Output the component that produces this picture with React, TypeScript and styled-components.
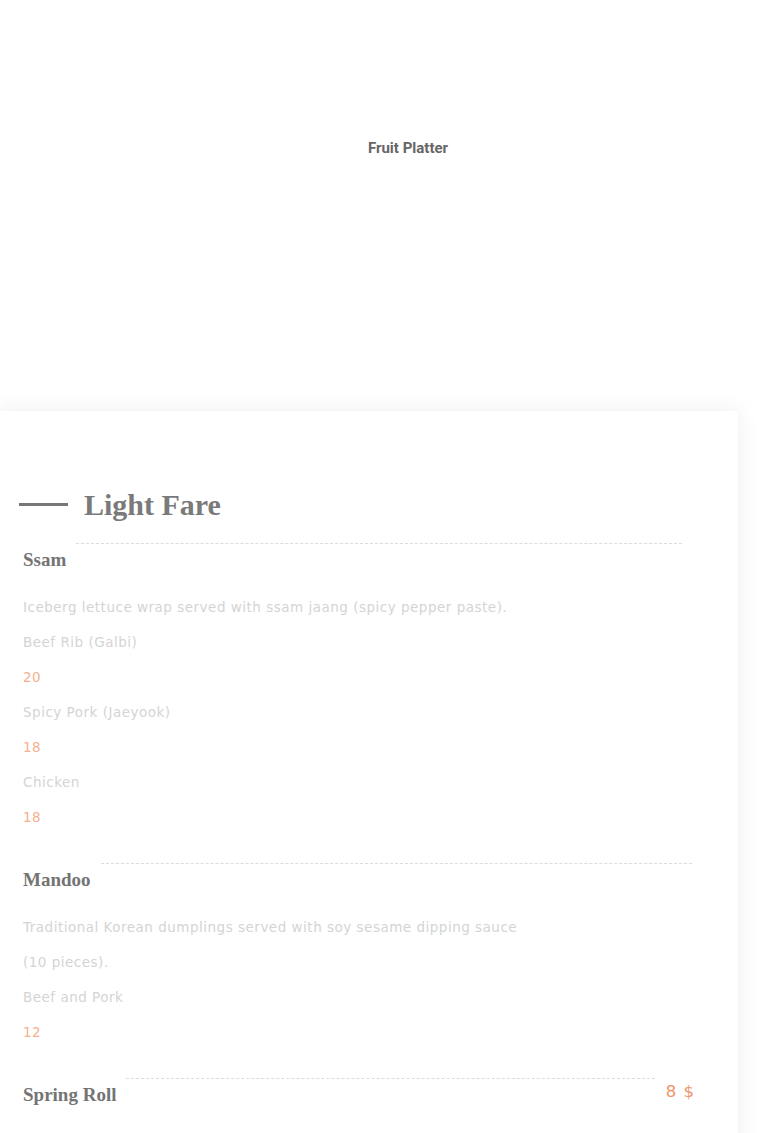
import React from 'react';
import styled, { createGlobalStyle } from 'styled-components';

interface MenuItem {
  title: string;
  price?: string;
  lineEnd: number;
  lines: { text: string; price?: boolean }[];
}

const items: MenuItem[] = [
  {
    title: 'Ssam',
    lineEnd: 11,
    lines: [
      { text: 'Iceberg lettuce wrap served with ssam jaang (spicy pepper paste).' },
      { text: 'Beef Rib (Galbi)' },
      { text: '20', price: true },
      { text: 'Spicy Pork (Jaeyook)' },
      { text: '18', price: true },
      { text: 'Chicken' },
      { text: '18', price: true },
    ],
  },
  {
    title: 'Mandoo',
    lineEnd: 1,
    lines: [
      { text: 'Traditional Korean dumplings served with soy sesame dipping sauce' },
      { text: '(10 pieces).' },
      { text: 'Beef and Pork' },
      { text: '12', price: true },
    ],
  },
  {
    title: 'Spring Roll',
    price: '8 $',
    lineEnd: 11,
    lines: [
      { text: 'Crispy vegetable spring rolls served with sweet chili dipping sauce.' },
    ],
  },
];

const App: React.FC = () => {
  return (
    <>
      <GlobalStyle />
      <Page>
        <Hero>
          <HeroTitle>Fruit Platter</HeroTitle>
        </Hero>
        <Card>
          <SectionHeading>
            <HeadingRule />
            <HeadingText>Light Fare</HeadingText>
          </SectionHeading>
          {items.map((item) => (
            <Item key={item.title}>
              <ItemHeader>
                <ItemTitle>{item.title}</ItemTitle>
                <Dots $end={item.lineEnd} />
                {item.price && <ItemPrice>{item.price}</ItemPrice>}
              </ItemHeader>
              <Lines>
                {item.lines.map((line, i) => (
                  <Line key={i} $price={line.price}>
                    {line.text}
                  </Line>
                ))}
              </Lines>
            </Item>
          ))}
        </Card>
      </Page>
    </>
  );
};

export default App;

const GlobalStyle = createGlobalStyle`
  html, body {
    margin: 0;
    padding: 0;
    background: #ffffff;
    overflow: hidden;
  }
  body {
    font-family: "DejaVu Sans", "Noto Sans", sans-serif;
  }
`;

const Page = styled.div`
  width: 770px;
  height: 1133px;
  overflow: hidden;
`;

const Hero = styled.div`
  height: 411px;
  display: flex;
  justify-content: center;
  padding: 139px 0 0 46px;
  box-sizing: border-box;
`;

const HeroTitle = styled.div`
  font-family: Roboto, "Liberation Sans", sans-serif;
  font-weight: 700;
  font-size: 15px;
  line-height: 18px;
  color: #666666;
  height: 18px;
`;

const Card = styled.div`
  width: 738px;
  min-height: 800px;
  background: #ffffff;
  box-shadow: 0 0 22px rgba(0, 0, 0, 0.07);
  padding: 75px 45px 0 22px;
  box-sizing: border-box;
`;

const SectionHeading = styled.div`
  display: flex;
  align-items: center;
  height: 36px;
  margin-left: -3px;
  margin-bottom: 26px;
`;

const HeadingRule = styled.span`
  width: 49px;
  height: 3px;
  background: #777777;
  margin-right: 16px;
`;

const HeadingText = styled.h2`
  margin: 0;
  font-family: "Liberation Serif", "DejaVu Serif", serif;
  font-weight: 700;
  font-size: 30px;
  line-height: 36px;
  color: #7a7a7a;
  padding-top: 2px;
`;

const Item = styled.div`
  margin-bottom: 33px;
`;

const ItemHeader = styled.div`
  display: flex;
  align-items: center;
  height: 24px;
`;

const ItemTitle = styled.h3`
  margin: 0;
  padding-left: 1px;
  font-family: "Liberation Serif", "DejaVu Serif", serif;
  font-weight: 700;
  font-size: 19px;
  line-height: 24px;
  color: #747474;
  white-space: nowrap;
`;

const Dots = styled.span<{ $end: number }>`
  flex: 1;
  align-self: flex-start;
  margin: -5px ${(p) => p.$end}px 0 10px;
  border-top: 1px dashed #dcdcdc;
  height: 0;
`;

const ItemPrice = styled.span`
  font-size: 16.5px;
  letter-spacing: 1px;
  color: #f0936a;
  line-height: 24px;
  margin-top: -6px;
  margin-right: -2px;
  white-space: nowrap;
`;

const Lines = styled.div`
  margin-top: 18px;
`;

const Line = styled.div<{ $price?: boolean }>`
  font-size: 13.5px;
  letter-spacing: 0.5px;
  line-height: 35px;
  height: 35px;
  padding-left: 1px;
  color: ${(p) => (p.$price ? '#f5b08f' : '#d4d4d4')};
  white-space: nowrap;
`;
